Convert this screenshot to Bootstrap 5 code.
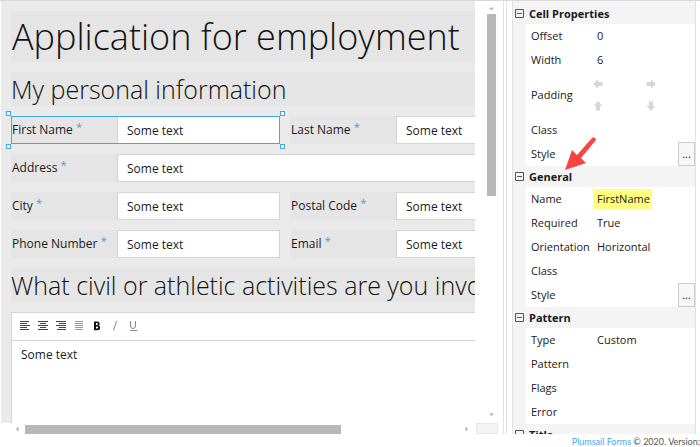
<!DOCTYPE html>
<html lang="en">
<head>
<meta charset="utf-8">
<meta name="viewport" content="width=device-width, initial-scale=1">
<title>Plumsail Forms</title>
<link href="https://cdn.jsdelivr.net/npm/bootstrap@5.3.0/dist/css/bootstrap.min.css" rel="stylesheet">
<style>
body { font-family: "Open Sans", "Noto Sans", sans-serif; font-size: 12px; line-height: 20px; color: #1a1a1a; background: #fff; }
.designer { grid-template-columns: minmax(0, 1fr) 193px; border-top: 1px solid #d8d8d8; }
.work { grid-template-columns: minmax(0, 1fr) 28px; grid-template-rows: minmax(0, 1fr) 11px; border-right: 4px double #e2e2e2; padding-left: 1px; }
.form-canvas { background: #eaeaea; padding: 10px 0 0 10px; }
.form-sheet { width: 548px; gap: 10px; }
.form-title, .form-heading { background: #e5e5e5; font-weight: 300; color: #111; white-space: nowrap; margin: 0; }
.form-title { font-size: 36px; line-height: 51px; padding-left: 1px; }
.form-heading { font-size: 25px; line-height: 34px; }
.field-row { gap: 10px; }
.field { background: #e5e5e5; height: 28px; }
.field label { width: 106px; line-height: 28px; white-space: nowrap; padding-left: 1px; }
.req { color: #3ba0dc; font-size: 11px; position: relative; top: -3px; }
.field input { min-width: 0; border: 1px solid #d4d4d4; padding: 2px 9px 0; background: #fff; color: inherit; }
.field.selected { outline: 1px solid #3ea8e0; outline-offset: -1px; }
.field.selected input { border-color: #3ea8e0; border-left-color: #d4d4d4; }
.grip { position: absolute; width: 5px; height: 5px; border: 1px solid #3ea8e0; background: #fff; }
.grip-tl { left: -5px; top: -5px; }
.grip-tr { right: -5px; top: -5px; }
.grip-bl { left: -5px; bottom: -5px; }
.grip-br { right: -5px; bottom: -5px; }
.editor { background: #fff; border: 1px solid #d4d4d4; min-height: 240px; }
.editor-tools { height: 28px; border-bottom: 1px solid #d4d4d4; padding-left: 5px; }
.editor-tools button { width: 18px; height: 20px; border: 0; padding: 0 2px 2px 0; background: none; line-height: 1; }
.editor textarea { border: 0; padding: 4px 9px; resize: none; height: 190px; color: inherit; }
.bar-v { padding: 5px 7px 6px 5px; }
.bar-h { padding: 1px 6px 0 14px; }
.thumb-v { width: 9px; height: 182px; background: #b8b8b8; }
.thumb-h { width: 316px; height: 9px; background: #b8b8b8; margin-left: 6px; }
.corner { width: 22px; height: 11px; margin-left: 1px; background: #f4f4f4; border: 1px solid #e6e6e6; }
.props { background: #f4f4f4; border-left: 1px solid #e2e2e2; border-right: 1px solid #e2e2e2; margin: 0 4px 0 5px; padding-top: 2px; font-size: 11px; }
.props-head { height: 21px; line-height: 21px; font-size: 11px; font-weight: 700; margin: 0; gap: 5px; padding-left: 2px; }
.props-head button { border: 0; padding: 0; background: none; line-height: 0; }
.prop { height: 24px; margin-left: 13px; background: #fff; padding-left: 5px; }
.prop-tall { height: 46px; }
.prop label, .prop-name { width: 62px; white-space: nowrap; flex: none; }
.prop input { border: 0; padding: 0 0 0 4px; min-width: 0; background: transparent; color: inherit; height: 20px; }
.prop .flagged { background: #ffff80; width: 59px; }
.prop .more { width: 17px; height: 24px; border: 1px solid #ccc; background: #f7f7f7; padding: 0; line-height: 18px; flex: none; color: #111; }
.pads { grid-template-columns: 53px 14px; row-gap: 10px; }
.pads button { border: 0; padding: 0; background: none; line-height: 0; width: 14px; margin-left: -2px; }
.pointer { position: absolute; right: 101px; top: 135px; }
.page-foot { height: 13px; font-family: Lato, "Open Sans", sans-serif; font-size: 9px; line-height: 16px; color: #555; white-space: nowrap; }
.page-foot a { color: #3fa9f5; text-decoration: none; }
</style>
</head>
<body>
<div class="vh-100 d-flex flex-column overflow-hidden">
<main class="designer d-grid flex-grow-1 overflow-hidden position-relative">
  <section class="work d-grid overflow-hidden" aria-label="Form">
    <div class="overflow-hidden">
      <div class="form-canvas h-100 overflow-hidden">
        <form class="form-sheet d-flex flex-column">
          <h1 class="form-title">Application for employment</h1>
          <h2 class="form-heading">My personal information</h2>
          <div class="field-row d-flex">
            <div class="field selected d-flex flex-fill position-relative"><label for="first">First Name <span class="req">*</span></label><input id="first" class="flex-fill" size="1" value="Some text"><span class="grip grip-tl"></span><span class="grip grip-tr"></span><span class="grip grip-bl"></span><span class="grip grip-br"></span></div>
            <div class="field d-flex flex-fill"><label for="last">Last Name <span class="req">*</span></label><input id="last" class="flex-fill" size="1" value="Some text"></div>
          </div>
          <div class="field d-flex"><label for="address">Address <span class="req">*</span></label><input id="address" class="flex-fill" size="1" value="Some text"></div>
          <div class="field-row d-flex">
            <div class="field d-flex flex-fill"><label for="city">City <span class="req">*</span></label><input id="city" class="flex-fill" size="1" value="Some text"></div>
            <div class="field d-flex flex-fill"><label for="postal">Postal Code <span class="req">*</span></label><input id="postal" class="flex-fill" size="1" value="Some text"></div>
          </div>
          <div class="field-row d-flex">
            <div class="field d-flex flex-fill"><label for="phone">Phone Number <span class="req">*</span></label><input id="phone" class="flex-fill" size="1" value="Some text"></div>
            <div class="field d-flex flex-fill"><label for="email">Email <span class="req">*</span></label><input id="email" class="flex-fill" size="1" value="Some text"></div>
          </div>
          <h2 class="form-heading">What civil or athletic activities are you involved</h2>
          <div class="editor">
            <div class="editor-tools d-flex align-items-center">
              <button type="button" aria-label="Align left"><svg width="10" height="10" stroke="#444"><path d="M0 .5h9M0 2.5h7M0 4.5h10M0 6.5h7M0 8.5h9"/></svg></button>
              <button type="button" aria-label="Align centre"><svg width="10" height="10" stroke="#444"><path d="M0 .5h10M2 2.5h6M0 4.5h10M2 6.5h6M0 8.5h10"/></svg></button>
              <button type="button" aria-label="Align right"><svg width="10" height="10" stroke="#444"><path d="M0 .5h10M3 2.5h7M0 4.5h10M3 6.5h7M1 8.5h9"/></svg></button>
              <button type="button" aria-label="Justify"><svg width="10" height="10" stroke="#999"><path d="M1 .5h8M1 2.5h8M1 4.5h8M1 6.5h8M1 8.5h8"/></svg></button>
              <button type="button" aria-label="Bold"><svg width="8" height="10" fill="#111" fill-rule="evenodd"><path d="M1 .5h3.200q2.500 0 2.500 2.200q0 1.400-1.200 1.900q1.700.4 1.700 2.100q0 2.500-2.800 2.500H1zM3 2v1.900h.8q1 0 1-1t-1-.9zM3 5.400v2.200h1q1.200 0 1.200-1.100T4 5.400z"/></svg></button>
              <button type="button" aria-label="Italic"><svg width="6" height="10" stroke="#888"><path d="M4.500 0L1.500 9.500"/></svg></button>
              <button type="button" aria-label="Underline"><svg width="9" height="11" fill="none" stroke="#888"><path d="M1.500 0v5a2.500 2.500 0 0 0 5 0V0M1 9.500h7"/></svg></button>
            </div>
            <textarea class="w-100 d-block" aria-label="Activities">Some text</textarea>
          </div>
        </form>
      </div>
    </div>
    <div class="bar-v d-flex flex-column align-items-end" aria-hidden="true">
      <svg width="9" height="4" class="mb-1" fill="#b0b0b0"><path d="M2 3.500L4.500 1L7 3.500z"/></svg>
      <div class="thumb-v"></div>
      <svg width="9" height="4" class="mt-auto" fill="#b0b0b0"><path d="M2 .5h5L4.500 3z"/></svg>
    </div>
    <div class="bar-h d-flex align-items-center" aria-hidden="true">
      <svg width="4" height="6" fill="#b0b0b0"><path d="M3.500 .5v5L1 3z"/></svg>
      <div class="thumb-h"></div>
      <svg width="4" height="6" class="ms-auto" fill="#b0b0b0"><path d="M.5 .5v5L3 3z"/></svg>
    </div>
    <div class="corner"></div>
  </section>

  <aside class="props overflow-hidden" aria-label="Properties">
    <h3 class="props-head d-flex align-items-center"><button type="button" aria-label="Collapse"><svg width="9" height="9" fill="none" stroke="#555"><path d="M.5 .5h8v8h-8zM2 4.500h5"/></svg></button>Cell Properties</h3>
    <div class="prop d-flex align-items-center"><label for="p1">Offset</label><input id="p1" class="flex-fill" size="1" value="0"></div>
    <div class="prop d-flex align-items-center"><label for="p2">Width</label><input id="p2" class="flex-fill" size="1" value="6"></div>
    <div class="prop prop-tall d-flex align-items-center"><span class="prop-name">Padding</span>
      <div class="pads d-grid">
        <button type="button" aria-label="Left"><svg width="12" height="12" viewBox="0 0 12 12" fill="#d6d6d6"><path d="M1 6L6 1.500v2.500h4.500v4H6v2.500z"/></svg></button>
        <button type="button" aria-label="Right"><svg width="12" height="12" viewBox="0 0 12 12" fill="#d6d6d6"><path d="M11 6L6 1.500v2.500H1.500v4H6v2.500z"/></svg></button>
        <button type="button" aria-label="Top"><svg width="12" height="12" viewBox="0 0 12 12" fill="#d6d6d6"><path d="M6 1L1.500 6h2.500v4.500h4V6h2.500z"/></svg></button>
        <button type="button" aria-label="Bottom"><svg width="12" height="12" viewBox="0 0 12 12" fill="#d6d6d6"><path d="M6 11L1.500 6h2.500V1.500h4V6h2.500z"/></svg></button>
      </div></div>
    <div class="prop d-flex align-items-center"><label for="p3">Class</label><input id="p3" class="flex-fill" size="1"></div>
    <div class="prop d-flex align-items-center"><label for="p4">Style</label><input id="p4" class="flex-fill" size="1"><button type="button" class="more">...</button></div>
    <h3 class="props-head d-flex align-items-center"><button type="button" aria-label="Collapse"><svg width="9" height="9" fill="none" stroke="#555"><path d="M.5 .5h8v8h-8zM2 4.500h5"/></svg></button>General</h3>
    <div class="prop d-flex align-items-center"><label for="p5">Name</label><input id="p5" class="flagged" value="FirstName"></div>
    <div class="prop d-flex align-items-center"><label for="p6">Required</label><input id="p6" class="flex-fill" size="1" value="True"></div>
    <div class="prop d-flex align-items-center"><label for="p7">Orientation</label><input id="p7" class="flex-fill" size="1" value="Horizontal"></div>
    <div class="prop d-flex align-items-center"><label for="p8">Class</label><input id="p8" class="flex-fill" size="1"></div>
    <div class="prop d-flex align-items-center"><label for="p9">Style</label><input id="p9" class="flex-fill" size="1"><button type="button" class="more">...</button></div>
    <h3 class="props-head d-flex align-items-center"><button type="button" aria-label="Collapse"><svg width="9" height="9" fill="none" stroke="#555"><path d="M.5 .5h8v8h-8zM2 4.500h5"/></svg></button>Pattern</h3>
    <div class="prop d-flex align-items-center"><label for="p10">Type</label><input id="p10" class="flex-fill" size="1" value="Custom"></div>
    <div class="prop d-flex align-items-center"><label for="p11">Pattern</label><input id="p11" class="flex-fill" size="1"></div>
    <div class="prop d-flex align-items-center"><label for="p12">Flags</label><input id="p12" class="flex-fill" size="1"></div>
    <div class="prop d-flex align-items-center"><label for="p13">Error</label><input id="p13" class="flex-fill" size="1"></div>
    <h3 class="props-head d-flex align-items-center"><button type="button" aria-label="Collapse"><svg width="9" height="9" fill="none" stroke="#555"><path d="M.5 .5h8v8h-8zM2 4.500h5"/></svg></button>Title</h3>
  </aside>
  <svg class="pointer" width="34" height="34" fill="#fa4343" aria-hidden="true"><path d="M0 34L7 14L12 19L27 2Q30 0 31 4L16 22L21 27z"/></svg>
</main>
<footer class="page-foot text-end"><a href="#">Plumsail Forms</a> © 2020. Version:</footer>
</div>
<script src="https://cdn.jsdelivr.net/npm/bootstrap@5.3.0/dist/js/bootstrap.bundle.min.js"></script>
</body>
</html>
